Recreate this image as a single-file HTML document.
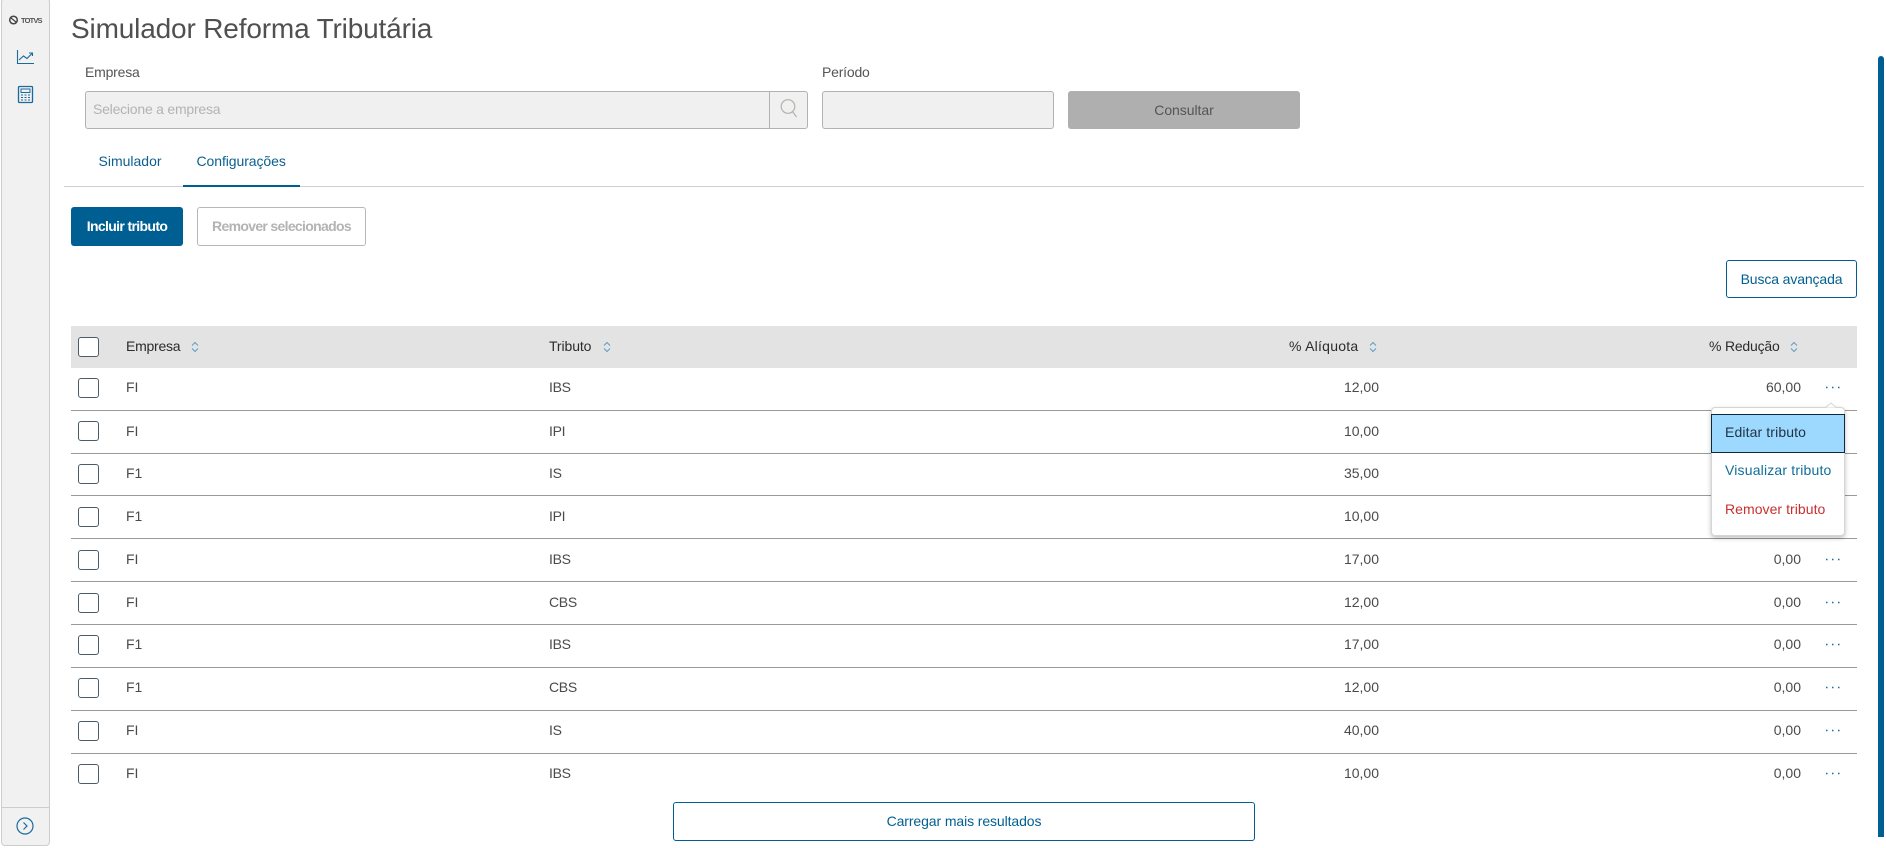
<!DOCTYPE html>
<html lang="pt-BR"><head><meta charset="utf-8"><title>Simulador Reforma Tributária</title>
<style>
*{box-sizing:border-box}
html,body{margin:0;padding:0;width:1886px;height:848px;overflow:hidden;background:#fff;font-family:"Liberation Sans",sans-serif;color:#4a4a4a}
.a{position:absolute}
.t{position:absolute;white-space:nowrap;line-height:20px;font-size:14px}
.side{left:1px;top:-2px;width:49px;height:848px;background:#f1f1f1;border:1px solid #cdcdcd;border-radius:4px}
.inp{background:#f0f0f0;border:1px solid #b2b2b2;border-radius:3px}
.btn{position:absolute;border-radius:3px;text-align:center;font-size:14px;white-space:nowrap}
.r{position:absolute;left:71px;width:1786px;height:43px;border-bottom:1px solid #999}
.r.h{border:0;background:#e3e3e3;top:326px;height:42px;color:#2b2b2b}
.r.l{border-bottom:0}
.cb{position:absolute;left:7px;top:11px;width:21px;height:20px;background:#fff;border:1px solid #4a5d66;border-radius:3px}
.r .t{top:10px}
.c1{left:55px}.c2{left:478px;letter-spacing:-.3px}.c3{right:478px}.c4{right:56px}
.d{position:absolute;left:1749px;top:19px}
.x .t{top:9px}.x .cb{top:10px}.x .d{top:18px}
.s{position:absolute;top:15px}
.m{position:absolute;left:1711px;top:407px;width:134px;height:129px;background:#fff;border:1px solid #d5d5d5;border-radius:4px;box-shadow:0 2px 5px rgba(0,0,0,.25)}
</style></head><body>

<div class="a side"></div>
<div class="a" style="left:2px;top:807px;width:47px;height:1px;background:#cdcdcd"></div>
<svg class="a" style="left:0;top:0" width="50" height="848" viewBox="0 0 50 848" fill="none">
<circle cx="13.5" cy="20" r="3.8" stroke="#444" stroke-width="1.5"/><path d="M11 18l5 4" stroke="#444" stroke-width="1.2"/>
<text x="21" y="23" font-family="Liberation Sans" font-size="7.5" font-weight="700" fill="#555" textLength="21.5">TOTVS</text>
<path d="M17.5 50v13.5h16.5" stroke="#1a6a9c" stroke-width="1.1"/>
<path d="M19 60l4.500-4 3.500 2.500 5-5M29 53h3.500v3" stroke="#1a6a9c" stroke-width="1.1"/>
<rect x="18.500" y="86.500" width="14" height="16" rx="1" stroke="#1a6a9c" stroke-width="1.300"/>
<rect x="21" y="89" width="9" height="3.500" stroke="#1a6a9c" stroke-width="1"/>
<path d="M21 95h2M24.500 95h2M28 95h2M21 97.500h2M24.500 97.500h2M28 97.500h2M21 100h2M24.500 100h2M28 100h2" stroke="#1a6a9c" stroke-width="1.100"/>
<circle cx="25" cy="826" r="8" stroke="#1a6a9c" stroke-width="1.200"/><path d="M23.500 822.500l3.500 3.500-3.500 3.500" stroke="#1a6a9c" stroke-width="1.200"/>
</svg>

<div class="t" style="left:71px;top:9px;line-height:40px;font-size:28px;letter-spacing:-.16px;color:#505050">Simulador Reforma Tributária</div>

<div class="t" style="left:85px;top:62px;font-size:14px;letter-spacing:-.2px;color:#555">Empresa</div>
<div class="a inp" style="left:85px;top:91px;width:723px;height:38px"></div>
<div class="a" style="left:769px;top:92px;width:1px;height:36px;background:#b2b2b2"></div>
<div class="t" style="left:93px;top:99px;color:#b3b3b3;font-size:14px;letter-spacing:-.22px">Selecione a empresa</div>
<svg class="a" style="left:776px;top:96px" width="26" height="26" viewBox="0 0 26 26" fill="none"><circle cx="12" cy="10.500" r="6.800" stroke="#b5b0aa" stroke-width="1.200"/><path d="M16.500 15.500l4 5.500" stroke="#b5b0aa" stroke-width="1.200"/></svg>

<div class="t" style="left:822px;top:62px;font-size:14px;letter-spacing:-.2px;color:#555">Período</div>
<div class="a inp" style="left:822px;top:91px;width:232px;height:38px"></div>
<div class="btn" style="left:1068px;top:91px;width:232px;height:38px;line-height:39px;background:#afafaf;color:#555;letter-spacing:-.05px">Consultar</div>

<div class="t" style="left:98.500px;top:151px;font-size:14px;letter-spacing:0;color:#0c5f8e">Simulador</div>
<div class="t" style="left:196.500px;top:151px;font-size:14px;letter-spacing:-.08px;color:#0c5f8e">Configurações</div>
<div class="a" style="left:64px;top:186px;width:1800px;height:1px;background:#cfcfcf"></div>
<div class="a" style="left:183px;top:185px;width:117px;height:2px;background:#005f92"></div>

<div class="btn" style="left:71px;top:207px;width:112px;height:39px;line-height:39px;background:#005f92;color:#fff;font-weight:700;letter-spacing:-.65px">Incluir tributo</div>
<div class="btn" style="left:197px;top:207px;width:169px;height:39px;line-height:37px;background:#fff;border:1px solid #b8b8b8;color:#b3b3b3;font-weight:700;letter-spacing:-.68px">Remover selecionados</div>
<div class="btn" style="left:1726px;top:260px;width:131px;height:38px;line-height:36px;background:#fff;border:1px solid #005f92;color:#005f92;letter-spacing:-.12px">Busca avançada</div>

<div class="r h">
 <div class="cb"></div>
 <div class="t c1" style="letter-spacing:-.25px">Empresa</div>
 <svg class="s" style="left:119px" width="10" height="12" fill="none"><path d="M2 4.500l3-3 3 3M2 7.500l3 3 3-3" stroke="#5c9cc6" stroke-width="1"/></svg>
 <div class="t c2" style="letter-spacing:-.1px">Tributo</div>
 <svg class="s" style="left:530.500px" width="10" height="12" fill="none"><path d="M2 4.500l3-3 3 3M2 7.500l3 3 3-3" stroke="#5c9cc6" stroke-width="1"/></svg>
 <div class="t" style="left:1218px;letter-spacing:.25px">% Alíquota</div>
 <svg class="s" style="left:1297px" width="10" height="12" fill="none"><path d="M2 4.500l3-3 3 3M2 7.500l3 3 3-3" stroke="#5c9cc6" stroke-width="1"/></svg>
 <div class="t" style="left:1638px;letter-spacing:-.2px">% Redução</div>
 <svg class="s" style="left:1718px" width="10" height="12" fill="none"><path d="M2 4.500l3-3 3 3M2 7.500l3 3 3-3" stroke="#5c9cc6" stroke-width="1"/></svg>
</div>

<div class="r" style="top:368px"><div class="cb" style="top:10px"></div><div class="t c1" style="top:9px">FI</div><div class="t c2" style="top:9px">IBS</div><div class="t c3" style="top:9px">12,00</div><div class="t c4" style="top:9px">60,00</div><svg class="d" style="top:18px" width="26" height="4"><path d="M6 1.500h1.500M12 1.500h1.500M18 1.500h1.500" stroke="#1a6a9c" stroke-width="1.500"/></svg></div>
<div class="r" style="top:411px"><div class="cb" style="top:10px"></div><div class="t c1">FI</div><div class="t c2">IPI</div><div class="t c3">10,00</div></div>
<div class="r" style="top:453px"><div class="cb"></div><div class="t c1">F1</div><div class="t c2">IS</div><div class="t c3">35,00</div></div>
<div class="r" style="top:496px"><div class="cb"></div><div class="t c1">F1</div><div class="t c2">IPI</div><div class="t c3">10,00</div></div>
<div class="r" style="top:539px"><div class="cb"></div><div class="t c1">FI</div><div class="t c2">IBS</div><div class="t c3">17,00</div><div class="t c4">0,00</div><svg class="d" width="26" height="4"><path d="M6 1.500h1.500M12 1.500h1.500M18 1.500h1.500" stroke="#1a6a9c" stroke-width="1.500"/></svg></div>
<div class="r" style="top:582px"><div class="cb"></div><div class="t c1">FI</div><div class="t c2">CBS</div><div class="t c3">12,00</div><div class="t c4">0,00</div><svg class="d" width="26" height="4"><path d="M6 1.500h1.500M12 1.500h1.500M18 1.500h1.500" stroke="#1a6a9c" stroke-width="1.500"/></svg></div>
<div class="r x" style="top:625px"><div class="cb"></div><div class="t c1">F1</div><div class="t c2">IBS</div><div class="t c3">17,00</div><div class="t c4">0,00</div><svg class="d" width="26" height="4"><path d="M6 1.500h1.500M12 1.500h1.500M18 1.500h1.500" stroke="#1a6a9c" stroke-width="1.500"/></svg></div>
<div class="r x" style="top:668px"><div class="cb"></div><div class="t c1">F1</div><div class="t c2">CBS</div><div class="t c3">12,00</div><div class="t c4">0,00</div><svg class="d" width="26" height="4"><path d="M6 1.500h1.500M12 1.500h1.500M18 1.500h1.500" stroke="#1a6a9c" stroke-width="1.500"/></svg></div>
<div class="r x" style="top:711px"><div class="cb"></div><div class="t c1">FI</div><div class="t c2">IS</div><div class="t c3">40,00</div><div class="t c4">0,00</div><svg class="d" width="26" height="4"><path d="M6 1.500h1.500M12 1.500h1.500M18 1.500h1.500" stroke="#1a6a9c" stroke-width="1.500"/></svg></div>
<div class="r l x" style="top:754px"><div class="cb"></div><div class="t c1">FI</div><div class="t c2">IBS</div><div class="t c3">10,00</div><div class="t c4">0,00</div><svg class="d" width="26" height="4"><path d="M6 1.500h1.500M12 1.500h1.500M18 1.500h1.500" stroke="#1a6a9c" stroke-width="1.500"/></svg></div>

<div class="m"></div>
<svg class="a" style="left:1825px;top:402px" width="12" height="6" fill="#fff"><path d="M0 6l6-5 6 5z" stroke="#d5d5d5" stroke-width="1"/><path d="M1 6.500h10v1H1z" stroke="none"/></svg>
<div class="a" style="left:1711px;top:414px;width:134px;height:39px;background:#9dd8ff;border:1.500px solid #0d2a3c"></div>
<div class="t" style="left:1725px;top:422px;letter-spacing:.12px;color:#1f3342">Editar tributo</div>
<div class="t" style="left:1725px;top:460px;letter-spacing:.18px;color:#0f6e9c">Visualizar tributo</div>
<div class="t" style="left:1725px;top:499px;letter-spacing:.05px;color:#c8302e">Remover tributo</div>

<div class="btn" style="left:673px;top:802px;width:582px;height:39px;line-height:37px;background:#fff;border:1px solid #005f92;color:#005f92;letter-spacing:-.1px">Carregar mais resultados</div>

<div class="a" style="left:1878px;top:56px;width:6px;height:781px;background:#005f92;border-radius:3px 3px 0 0"></div>
</body></html>
